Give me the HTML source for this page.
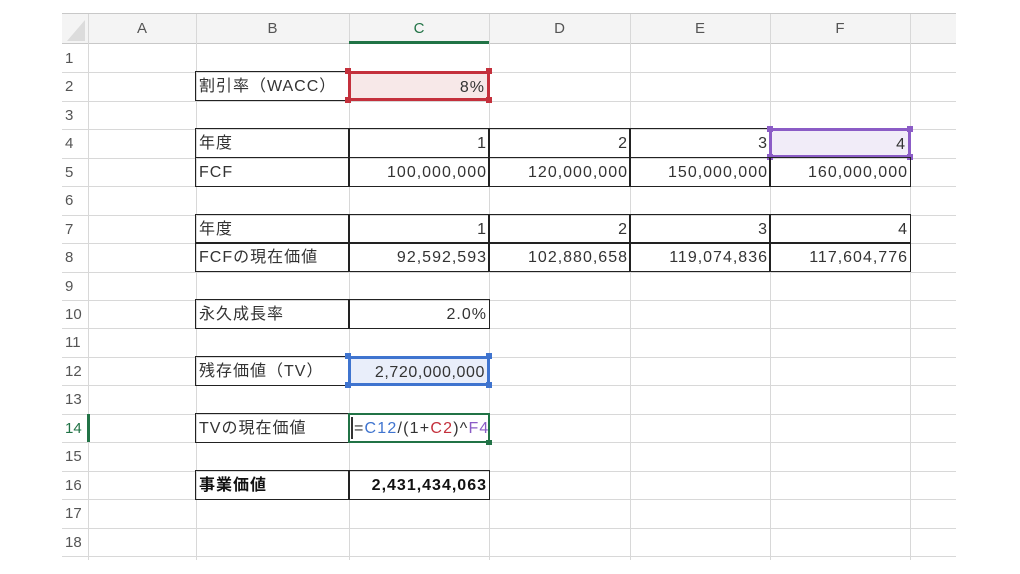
<!DOCTYPE html>
<html><head><meta charset="utf-8"><style>
body{margin:0;width:1020px;height:574px;background:#fff;position:relative;overflow:hidden;font-family:"Liberation Sans","Noto Sans CJK JP",sans-serif;color:#333}
.a{position:absolute;box-sizing:border-box}
.h{position:absolute;top:14px;height:30px;line-height:30px;text-align:center;font-size:15px;color:#555}
.vl{position:absolute;top:14px;width:1px;height:546px;background:#d8d8d8}
.hl{position:absolute;left:62px;width:894px;height:1px;background:#d8d8d8}
.rn{position:absolute;left:62px;width:26px;font-size:15px;color:#555;padding-left:3px;box-sizing:border-box;line-height:30px}
.b{position:absolute;box-sizing:border-box;border:1.5px solid #222;height:30px;line-height:30px;font-size:16px;letter-spacing:1px;padding:0 3px;white-space:nowrap;overflow:hidden}
.r{text-align:right;letter-spacing:1px;padding-right:2px}
.bd{font-weight:bold;color:#111}
.sq{position:absolute;width:6px;height:6px}
</style></head><body>
<div class="a" style="left:62px;top:13px;width:894px;height:31px;background:#f4f4f4;border-top:1px solid #c8c8c8;border-bottom:1px solid #c8c8c8"></div>
<svg class="a" style="left:64px;top:16px" width="22" height="26"><polygon points="21,4 21,25 3,25" fill="#dcdcdc"/></svg>
<div class="vl" style="left:88px"></div><div class="vl" style="left:196px"></div><div class="vl" style="left:349px"></div><div class="vl" style="left:489px"></div><div class="vl" style="left:630px"></div><div class="vl" style="left:770px"></div><div class="vl" style="left:910px"></div>
<div class="h" style="left:88px;width:108px">A</div>
<div class="h" style="left:196px;width:153px">B</div>
<div class="h" style="left:349px;width:140px;color:#217346">C</div>
<div class="a" style="left:349px;top:41px;width:140px;height:3px;background:#217346"></div>
<div class="h" style="left:489px;width:141px">D</div>
<div class="h" style="left:630px;width:140px">E</div>
<div class="h" style="left:770px;width:140px">F</div>

<div class="hl" style="top:72px"></div><div class="hl" style="top:101px"></div><div class="hl" style="top:129px"></div><div class="hl" style="top:158px"></div><div class="hl" style="top:186px"></div><div class="hl" style="top:215px"></div><div class="hl" style="top:243px"></div><div class="hl" style="top:272px"></div><div class="hl" style="top:300px"></div><div class="hl" style="top:328px"></div><div class="hl" style="top:357px"></div><div class="hl" style="top:385px"></div><div class="hl" style="top:414px"></div><div class="hl" style="top:442px"></div><div class="hl" style="top:471px"></div><div class="hl" style="top:499px"></div><div class="hl" style="top:528px"></div><div class="hl" style="top:556px"></div>

<div class="rn" style="top:44px">1</div><div class="rn" style="top:72px">2</div><div class="rn" style="top:101px">3</div><div class="rn" style="top:129px">4</div><div class="rn" style="top:158px">5</div><div class="rn" style="top:186px">6</div><div class="rn" style="top:215px">7</div><div class="rn" style="top:243px">8</div><div class="rn" style="top:272px">9</div><div class="rn" style="top:300px">10</div><div class="rn" style="top:328px">11</div><div class="rn" style="top:357px">12</div><div class="rn" style="top:385px">13</div><div class="rn" style="top:414px;color:#217346">14</div><div class="rn" style="top:442px">15</div><div class="rn" style="top:471px">16</div><div class="rn" style="top:499px">17</div><div class="rn" style="top:528px">18</div>
<div class="a" style="left:87px;top:414px;width:3px;height:28px;background:#217346"></div>

<div class="b" style="left:195px;top:71px;width:155px">割引率（WACC）</div>
<div class="b r" style="left:348px;top:71px;width:142px;background:#f7e8e8;border:3px solid #c4303c;line-height:27px">8%</div>
<div class="sq" style="left:345px;top:68px;background:#c4303c"></div><div class="sq" style="left:486px;top:68px;background:#c4303c"></div><div class="sq" style="left:345px;top:97px;background:#c4303c"></div><div class="sq" style="left:486px;top:97px;background:#c4303c"></div>

<div class="b" style="left:195px;top:128px;width:155px">年度</div>
<div class="b r" style="left:348px;top:128px;width:142px">1</div>
<div class="b r" style="left:488px;top:128px;width:143px">2</div>
<div class="b r" style="left:629px;top:128px;width:142px">3</div>
<div class="b r" style="left:769px;top:128px;width:142px;background:#f1ecf8;border:3px solid #8b5cc6;line-height:27px">4</div>
<div class="sq" style="left:767px;top:126px;background:#8b5cc6"></div><div class="sq" style="left:907px;top:126px;background:#8b5cc6"></div><div class="sq" style="left:767px;top:154px;background:#8b5cc6"></div><div class="sq" style="left:907px;top:154px;background:#8b5cc6"></div>
<div class="b" style="left:195px;top:157px;width:155px">FCF</div>
<div class="b r" style="left:348px;top:157px;width:142px">100,000,000</div>
<div class="b r" style="left:488px;top:157px;width:143px">120,000,000</div>
<div class="b r" style="left:629px;top:157px;width:142px">150,000,000</div>
<div class="b r" style="left:769px;top:157px;width:142px">160,000,000</div>

<div class="b" style="left:195px;top:214px;width:155px">年度</div>
<div class="b r" style="left:348px;top:214px;width:142px">1</div>
<div class="b r" style="left:488px;top:214px;width:143px">2</div>
<div class="b r" style="left:629px;top:214px;width:142px">3</div>
<div class="b r" style="left:769px;top:214px;width:142px">4</div>
<div class="b" style="left:195px;top:242px;width:155px">FCFの現在価値</div>
<div class="b r" style="left:348px;top:242px;width:142px">92,592,593</div>
<div class="b r" style="left:488px;top:242px;width:143px">102,880,658</div>
<div class="b r" style="left:629px;top:242px;width:142px">119,074,836</div>
<div class="b r" style="left:769px;top:242px;width:142px">117,604,776</div>

<div class="b" style="left:195px;top:299px;width:155px">永久成長率</div>
<div class="b r" style="left:348px;top:299px;width:142px">2.0%</div>

<div class="b" style="left:195px;top:356px;width:155px">残存価値（TV）</div>
<div class="b r" style="left:348px;top:356px;width:142px;background:#e9eefa;border:3px solid #3f74cf;line-height:27px;letter-spacing:0.6px">2,720,000,000</div>
<div class="sq" style="left:345px;top:353px;background:#3f74cf"></div><div class="sq" style="left:486px;top:353px;background:#3f74cf"></div><div class="sq" style="left:345px;top:382px;background:#3f74cf"></div><div class="sq" style="left:486px;top:382px;background:#3f74cf"></div>

<div class="b" style="left:195px;top:413px;width:155px">TVの現在価値</div>
<div class="b" style="left:348px;top:413px;width:142px;border:2.5px solid #217346;line-height:28px;padding-left:4px;overflow:visible;letter-spacing:1.2px"><span>=</span><span style="color:#3f74cf">C12</span>/(1+<span style="color:#c4303c">C2</span>)^<span style="color:#8b5cc6">F4</span></div>
<div class="a" style="left:351px;top:417px;width:2px;height:22px;background:#333"></div>
<div class="a" style="left:486px;top:440px;width:6px;height:5px;background:#217346"></div>

<div class="b bd" style="left:195px;top:470px;width:155px">事業価値</div>
<div class="b r bd" style="left:348px;top:470px;width:142px">2,431,434,063</div>
</body></html>
